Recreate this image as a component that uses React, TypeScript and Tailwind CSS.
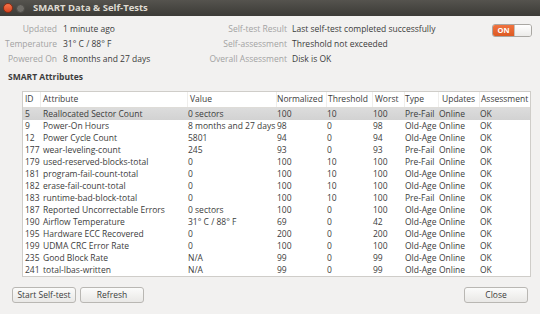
import React from 'react'

const font = { fontFamily: '"Open Sans", "Liberation Sans", sans-serif' }

interface Attr {
  id: string
  name: string
  value: string
  norm: string
  thresh: string
  worst: string
  type: string
}

const rows: Attr[] = [
  { id: '5', name: 'Reallocated Sector Count', value: '0 sectors', norm: '100', thresh: '10', worst: '100', type: 'Pre-Fail' },
  { id: '9', name: 'Power-On Hours', value: '8 months and 27 days', norm: '98', thresh: '0', worst: '98', type: 'Old-Age' },
  { id: '12', name: 'Power Cycle Count', value: '5801', norm: '94', thresh: '0', worst: '94', type: 'Old-Age' },
  { id: '177', name: 'wear-leveling-count', value: '245', norm: '93', thresh: '0', worst: '93', type: 'Pre-Fail' },
  { id: '179', name: 'used-reserved-blocks-total', value: '0', norm: '100', thresh: '10', worst: '100', type: 'Pre-Fail' },
  { id: '181', name: 'program-fail-count-total', value: '0', norm: '100', thresh: '10', worst: '100', type: 'Old-Age' },
  { id: '182', name: 'erase-fail-count-total', value: '0', norm: '100', thresh: '10', worst: '100', type: 'Old-Age' },
  { id: '183', name: 'runtime-bad-block-total', value: '0', norm: '100', thresh: '10', worst: '100', type: 'Pre-Fail' },
  { id: '187', name: 'Reported Uncorrectable Errors', value: '0 sectors', norm: '100', thresh: '0', worst: '100', type: 'Old-Age' },
  { id: '190', name: 'Airflow Temperature', value: '31° C / 88° F', norm: '69', thresh: '0', worst: '42', type: 'Old-Age' },
  { id: '195', name: 'Hardware ECC Recovered', value: '0', norm: '200', thresh: '0', worst: '200', type: 'Old-Age' },
  { id: '199', name: 'UDMA CRC Error Rate', value: '0', norm: '100', thresh: '0', worst: '100', type: 'Old-Age' },
  { id: '235', name: 'Good Block Rate', value: 'N/A', norm: '99', thresh: '0', worst: '99', type: 'Old-Age' },
  { id: '241', name: 'total-lbas-written', value: 'N/A', norm: '99', thresh: '0', worst: '99', type: 'Old-Age' },
]

// column widths, measured off the screenshot
const cols = ['w-[18px]', 'w-[147px]', 'w-[89px]', 'w-[50px]', 'w-[46px]', 'w-[32px]', 'w-[34px]', 'w-[41px]', 'flex-1']
const heads = ['ID', 'Attribute', 'Value', 'Normalized', 'Threshold', 'Worst', 'Type', 'Updates', 'Assessment']
const headPad = ['pl-[2px]', 'pl-[2px]', 'pl-[2px]', 'pl-0', 'pl-[1px]', 'pl-[2px]', 'pl-0', 'pl-[3px]', 'pl-[1px]']
const cellPad = ['pl-[2px]', 'pl-[2px]', 'pl-0', 'pl-0', 'pl-0', 'pl-0', 'pl-0', 'pl-0', 'pl-0']

function Button({ label, className = '' }: { label: string; className?: string }) {
  return (
    <button
      className={`h-[16px] w-[64px] rounded-[3px] border border-[#b9b7b3] bg-gradient-to-b from-[#fbfbfa] to-[#e9e8e6] text-[8.5px] leading-none text-[#3c3c3c] ${className}`}
    >
      {label}
    </button>
  )
}

export default function App() {
  return (
    <div className="flex h-[314px] w-[540px] flex-col overflow-hidden bg-[#f2f1f0] text-[#3c3c3c]" style={font}>
      <div className="flex h-[16px] items-center bg-gradient-to-b from-[#55534e] to-[#3c3b37]">
        <div className="ml-[3px] h-[10px] w-[10px] rounded-full border border-[#8a2d15] bg-gradient-to-b from-[#f7744a] to-[#d8441e]" />
        <div className="ml-[3px] h-[9px] w-[9px] rounded-full border border-[#4c4a46] bg-[#6f6d68]" />
        <span className="ml-[8px] text-[9.5px] font-bold text-[#dfdbd2]">SMART Data &amp; Self-Tests</span>
      </div>

      <div className="flex pt-[6px] text-[8.5px]">
        <div className="grid w-[200px] auto-rows-[15px] grid-cols-[57px_auto] items-center gap-x-[6px]">
          <span className="text-right text-[#a3a3a3]">Updated</span>
          <span>1 minute ago</span>
          <span className="text-right text-[#a3a3a3]">Temperature</span>
          <span>31° C / 88° F</span>
          <span className="text-right text-[#a3a3a3]">Powered On</span>
          <span>8 months and 27 days</span>
        </div>
        <div className="grid auto-rows-[15px] grid-cols-[87px_auto] items-center gap-x-[5px]">
          <span className="text-right text-[#a3a3a3]">Self-test Result</span>
          <span>Last self-test completed successfully</span>
          <span className="text-right text-[#a3a3a3]">Self-assessment</span>
          <span>Threshold not exceeded</span>
          <span className="text-right text-[#a3a3a3]">Overall Assessment</span>
          <span>Disk is OK</span>
        </div>
        <div className="ml-auto mr-[8px] mt-[2px] flex h-[13px] w-[40px] overflow-hidden rounded-[3px] border border-[#a9a7a3]">
          <div className="flex w-[21px] items-center justify-center bg-gradient-to-b from-[#f0733f] to-[#dd5a22] text-[7.5px] font-bold text-white">
            ON
          </div>
          <div className="flex-1 border-l border-[#c4c2be] bg-gradient-to-b from-white to-[#ecebe9]" />
        </div>
      </div>

      <div className="ml-[8px] mt-[4px] h-[12px] text-[8.5px] font-bold leading-[12px]">SMART Attributes</div>

      <div className="ml-[22px] mt-[8px] w-[509px] border border-[#cfcdc9] bg-white text-[8.5px]">
        <div className="flex h-[16px] items-center border-b border-[#dedcd8]">
          {heads.map((h, i) => (
            <div
              key={h}
              className={`${cols[i]} ${headPad[i]} flex h-full items-center ${i < 8 ? 'border-r border-[#efeeec]' : ''}`}
            >
              {h}
            </div>
          ))}
        </div>
        {rows.map((r, idx) => (
          <div
            key={r.id}
            className={`flex h-[12px] items-center leading-[12px] ${idx === 0 ? 'bg-gradient-to-b from-[#dcdcdc] to-[#d2d2d2]' : ''}`}
          >
            {[r.id, r.name, r.value, r.norm, r.thresh, r.worst, r.type, 'Online', 'OK'].map((v, i) => (
              <div key={i} className={`${cols[i]} ${cellPad[i]} whitespace-nowrap`}>
                {v}
              </div>
            ))}
          </div>
        ))}
      </div>

      <div className="mt-[10px] flex px-[12px]">
        <Button label="Start Self-test" />
        <Button label="Refresh" className="ml-[4px]" />
        <Button label="Close" className="ml-auto" />
      </div>
    </div>
  )
}
